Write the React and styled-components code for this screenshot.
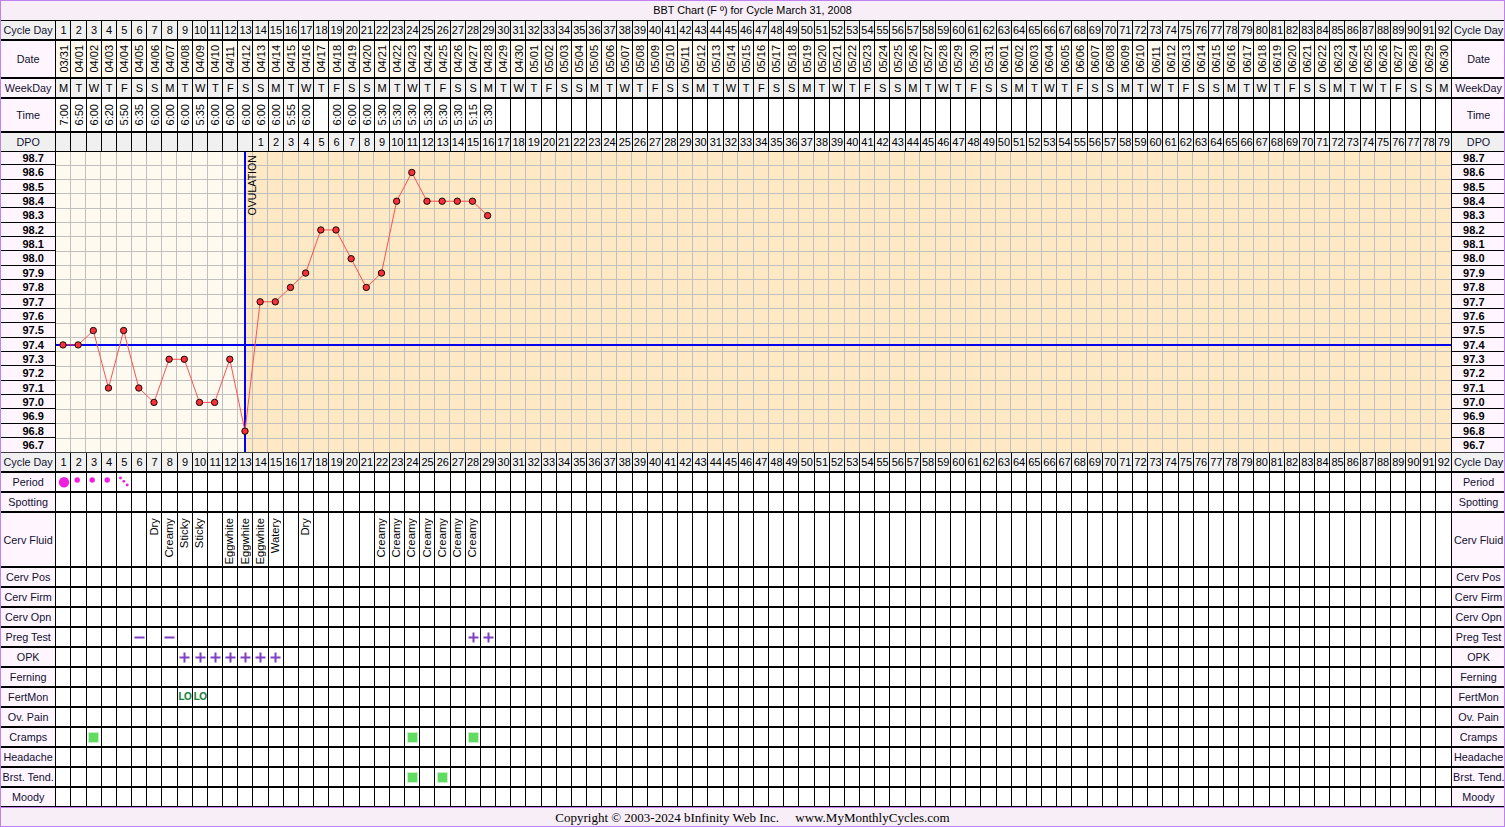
import React from 'react';
import styled, { createGlobalStyle } from 'styled-components';

const GlobalStyle = createGlobalStyle`
  html, body { margin: 0; padding: 0; background: #f8eef8; }
  body { font-family: "Liberation Sans", Arial, sans-serif; font-size: 11px; color: #000; }
`;

const DAYS = 92;
const COLS = `54.3px repeat(${DAYS}, 1fr) 53.4px`;
const WEEK = ['S', 'M', 'T', 'W', 'T', 'F', 'S'];

const TEMPS = [97.4, 97.4, 97.5, 97.1, 97.5, 97.1, 97.0, 97.3, 97.3, 97.0, 97.0, 97.3, 96.8,
  97.7, 97.7, 97.8, 97.9, 98.2, 98.2, 98.0, 97.8, 97.9, 98.4, 98.6, 98.4, 98.4, 98.4, 98.4, 98.3];
const TIMES = ['7:00', '6:50', '6:00', '6:20', '5:50', '6:35', '6:00', '6:00', '6:00', '5:35', '6:00', '6:00',
  '6:00', '6:00', '6:00', '5:55', '6:00', '', '6:00', '6:00', '6:00', '5:30', '5:30', '5:30', '5:30', '5:30',
  '5:30', '5:15', '5:30'];
const FLUID = { 7: 'Dry', 8: 'Creamy', 9: 'Sticky', 10: 'Sticky', 12: 'Eggwhite', 13: 'Eggwhite', 14: 'Eggwhite',
  15: 'Watery', 17: 'Dry', 22: 'Creamy', 23: 'Creamy', 24: 'Creamy', 25: 'Creamy', 26: 'Creamy', 27: 'Creamy', 28: 'Creamy' };

const dayList = Array.from({ length: DAYS }, (_, i) => i + 1);
const dates = dayList.map((d) => new Date(Date.UTC(2008, 2, 30 + d)));
const mmdd = (dt) => String(dt.getUTCMonth() + 1).padStart(2, '0') + '/' + String(dt.getUTCDate()).padStart(2, '0');

const Frame = styled.div`
  box-sizing: border-box;
  width: 1505px;
  height: 827px;
  border: 1px solid #c080f0;
  background: #f8eef8;
  overflow: hidden;
`;
const Title = styled.div`
  height: 19px;
  line-height: 18px;
  text-align: center;
  font-size: 10.85px;
`;
const Footer = styled.div`
  box-sizing: border-box;
  height: 19px;
  border-top: 1px solid #c080f0;
  text-align: center;
  font-family: "Liberation Serif", "Times New Roman", serif;
  font-size: 13px;
  line-height: 20px;
  white-space: pre;
`;
const Row = styled.div`
  box-sizing: border-box;
  display: grid;
  grid-template-columns: ${COLS};
  height: ${(p) => p.$h}px;
  border-bottom: ${(p) => p.$thin ? 1 : 2}px solid #000;
  ${(p) => p.$top && `border-top: 1px solid ${p.$top};`}
`;
const Label = styled.div`
  box-sizing: border-box;
  display: flex;
  align-items: center;
  justify-content: safe center;
  overflow: hidden;
  white-space: nowrap;
  font-size: 10.8px;
  background: ${(p) => p.$bg || '#fff5ff'};
  color: #101030;
  ${(p) => p.$right && 'border-left: 1px solid #000; padding-left: 1.5px;'}
`;
const Cell = styled.div`
  box-sizing: border-box;
  display: flex;
  align-items: center;
  justify-content: center;
  min-width: 0;
  overflow: hidden;
  border-left: 1px solid #000;
  padding-left: 0.5px;
  background: ${(p) => p.$bg || '#fff'};
  white-space: nowrap;
`;
const VerticalText = styled.span`
  writing-mode: vertical-rl;
  transform: rotate(180deg);
`;
const FluidText = styled(VerticalText)`
  align-self: flex-start;
  margin: 5px 2px 0 0;
  font-size: 11.3px;
`;
const LoText = styled.span`
  color: #208040;
  font-weight: bold;
  font-size: 10px;
  letter-spacing: -0.6px;
  margin-top: -2px;
  text-shadow: 0 0 1px #c8f0c8;
`;
const GreenBox = styled.span`
  box-sizing: border-box;
  display: block;
  width: 11px;
  height: 11px;
  background: #60dd60;
  border: 1px solid #c8f0c8;
`;
const ChartRow = styled.div`
  display: grid;
  grid-template-columns: 54.3px 1fr 53.4px;
  height: 300px;
`;
const Axis = styled.div`
  display: grid;
  grid-template-rows: 13.3px repeat(19, 14.37px) 13.7px;
  background: #fff5ff;
  ${(p) => p.$right && 'border-left: 1px solid #000;'}
`;
const AxisTick = styled.div`
  display: flex;
  align-items: center;
  justify-content: center;
  box-sizing: border-box;
  border-bottom: 1px solid #000;
  font-weight: bold;
  font-size: 11px;
  padding: ${(p) => p.$right ? '0.6px 8px 0 0' : '0.6px 0 0 10px'};
  &:last-child { border-bottom: none; }
`;
const PlotWrap = styled.div`
  min-width: 0;
  overflow: hidden;
  border-left: 1px solid #000;
`;
const Plot = styled.svg`
  display: block;
`;

const PLOT_W = 1395;
const COL_W = 1395.3 / DAYS;
const dayX = (d) => (d - 0.5) * COL_W - 0.6;
const tempY = (t) => 6.1 + (98.7 - t) * 143.7;

function Chart() {
  const points = TEMPS.map((t, i) => `${dayX(i + 1)},${tempY(t)}`).join(' ');
  const ovX = dayX(13);
  return (
    <Plot width={PLOT_W} height={300} viewBox={`0 0 ${PLOT_W} 300`}>
      <rect x="0" y="0" width={ovX} height="300" fill="#fffaf0" />
      <rect x={ovX} y="0" width={PLOT_W - ovX} height="300" fill="#ffe8c4" />
      <g stroke="#c0c0c0" strokeWidth="1" shapeRendering="crispEdges">
        {dayList.slice(0, -1).map((d) => (
          <line key={d} x1={d * COL_W - 0.5} x2={d * COL_W - 0.5} y1="0" y2="300" />
        ))}
        {Array.from({ length: 20 }, (_, i) => (
          <line key={i} x1="0" x2={PLOT_W} y1={13 + i * 14.37} y2={13 + i * 14.37} />
        ))}
      </g>
      <line x1={ovX} x2={ovX} y1="0" y2="300" stroke="#0000f0" strokeWidth="2" shapeRendering="crispEdges" />
      <line x1="0" x2={PLOT_W} y1={tempY(97.4)} y2={tempY(97.4)} stroke="#0000f0" strokeWidth="2" shapeRendering="crispEdges" />
      <text transform={`translate(${ovX + 11},63.5) rotate(-90)`} fontSize="10.6" fontFamily="Liberation Sans, Arial, sans-serif" fill="#000">OVULATION</text>
      <polyline points={points} fill="none" stroke="#ff5050" strokeWidth="1" />
      {TEMPS.map((t, i) => (
        <circle key={i} cx={dayX(i + 1)} cy={tempY(t)} r="3.2" fill="#f83038" stroke="#000" strokeWidth="0.9" />
      ))}
    </Plot>
  );
}

function PeriodMark({ type }) {
  return (
    <svg width="15" height="18" viewBox="0 0 15 18">
      {type === 'heavy' && <circle cx="7.7" cy="9.3" r="5.7" fill="#f020e0" />}
      {type === 'medium' && <circle cx="5.7" cy="6.7" r="3" fill="#f020e0" />}
      {type === 'light' && (
        <g fill="#f020e0">
          <circle cx="3.8" cy="4.7" r="1.6" />
          <circle cx="7.5" cy="8.3" r="1.6" />
          <circle cx="11.2" cy="12.3" r="1.6" />
        </g>
      )}
    </svg>
  );
}
function Plus() {
  return (
    <svg width="11" height="11" viewBox="0 0 11 11">
      <path d="M0.5 5.5H10.5M5.5 0.5V10.5" stroke="#8040c0" strokeWidth="2" />
    </svg>
  );
}
function Minus() {
  return (
    <svg width="11" height="11" viewBox="0 0 11 11">
      <path d="M0.5 5.5H10.5" stroke="#8040c0" strokeWidth="2" />
    </svg>
  );
}

function GridRow({ label, h, thin, top, labelBg, cellBg, cell }) {
  return (
    <Row $h={h} $thin={thin} $top={top}>
      <Label $bg={labelBg}>{label}</Label>
      {dayList.map((d) => (
        <Cell key={d} $bg={cellBg}>{cell ? cell(d) : null}</Cell>
      ))}
      <Label $bg={labelBg} $right>{label}</Label>
    </Row>
  );
}

const dayNumber = (d) => d;
const marks = (map) => (d) => map[d] || null;
const green = <GreenBox />;
const plus = <Plus />;
const minus = <Minus />;
const medium = <PeriodMark type="medium" />;

export default function App() {
  const axis = Array.from({ length: 21 }, (_, i) => (98.7 - i / 10).toFixed(1));
  return (
    <Frame>
      <GlobalStyle />
      <Title>BBT Chart (F º) for Cycle March 31, 2008</Title>
      <GridRow label="Cycle Day" h={21} top="#000" labelBg="#f0f0f0" cellBg="#f0f0f0" cell={dayNumber} />
      <GridRow label="Date" h={38} cellBg="#fffaf0" cell={(d) => <VerticalText>{mmdd(dates[d - 1])}</VerticalText>} />
      <GridRow label="WeekDay" h={20} cellBg="#f0f0f0" cell={(d) => WEEK[dates[d - 1].getUTCDay()]} />
      <GridRow label="Time" h={34} cell={(d) => TIMES[d - 1] ? <VerticalText>{TIMES[d - 1]}</VerticalText> : null} />
      <GridRow label="DPO" h={19} thin labelBg="#f0f0f0" cellBg="#f0f0f0" cell={(d) => d > 13 ? d - 13 : null} />
      <ChartRow>
        <Axis>{axis.map((v) => <AxisTick key={v}>{v}</AxisTick>)}</Axis>
        <PlotWrap><Chart /></PlotWrap>
        <Axis $right>{axis.map((v) => <AxisTick key={v} $right>{v}</AxisTick>)}</Axis>
      </ChartRow>
      <GridRow label="Cycle Day" h={21} top="#404040" labelBg="#f0f0f0" cellBg="#f0f0f0" cell={dayNumber} />
      <GridRow label="Period" h={20} cell={marks({ 1: <PeriodMark type="heavy" />, 2: medium, 3: medium, 4: medium, 5: <PeriodMark type="light" /> })} />
      <GridRow label="Spotting" h={20} />
      <GridRow label="Cerv Fluid" h={55} cell={(d) => FLUID[d] ? <FluidText>{FLUID[d]}</FluidText> : null} />
      <GridRow label="Cerv Pos" h={20} />
      <GridRow label="Cerv Firm" h={20} />
      <GridRow label="Cerv Opn" h={20} />
      <GridRow label="Preg Test" h={20} cell={marks({ 6: minus, 8: minus, 28: plus, 29: plus })} />
      <GridRow label="OPK" h={20} cell={marks({ 9: plus, 10: plus, 11: plus, 12: plus, 13: plus, 14: plus, 15: plus })} />
      <GridRow label="Ferning" h={20} />
      <GridRow label="FertMon" h={20} cell={marks({ 9: <LoText>LO</LoText>, 10: <LoText>LO</LoText> })} />
      <GridRow label="Ov. Pain" h={20} />
      <GridRow label="Cramps" h={20} cell={marks({ 3: green, 24: green, 28: green })} />
      <GridRow label="Headache" h={20} />
      <GridRow label="Brst. Tend." h={20} cell={marks({ 24: green, 26: green })} />
      <GridRow label="Moody" h={19} thin />
      <Footer>{'Copyright © 2003-2024 bInfinity Web Inc.     www.MyMonthlyCycles.com'}</Footer>
    </Frame>
  );
}
